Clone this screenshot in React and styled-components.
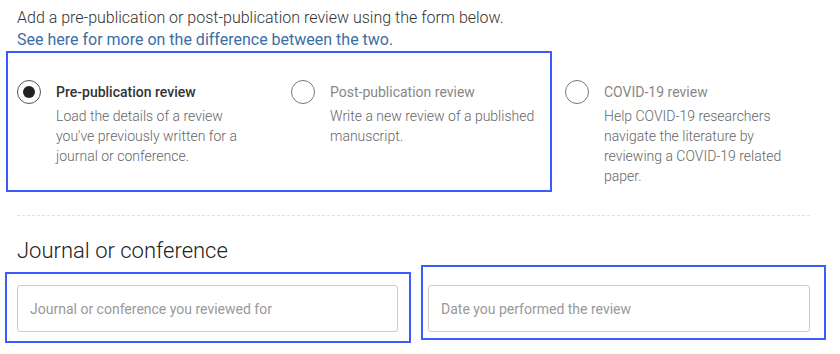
import React from "react";
import styled, { createGlobalStyle } from "styled-components";

const GlobalStyle = createGlobalStyle`
    body {
        margin: 0;
        background: #fff;
        font-family: Roboto, "Liberation Sans", sans-serif;
        font-weight: 300;
        color: #333;
    }
`;

const Page = styled.div`
    position: relative;
    width: 793px;
    min-height: 347px;
    padding: 7px 30px 0 17px;
`;

const Intro = styled.p`
    margin: 0;
    font-size: 16px;
    line-height: 22px;
    color: #333;
`;

const Link = styled.a`
    color: #3b6ea5;
    font-weight: 400;
    text-decoration: none;
`;

const Types = styled.div`
    display: grid;
    grid-template-columns: repeat(3, 274px);
    padding-top: 31px;
    height: 105px;
`;

const Type = styled.label`
    display: flex;
    align-items: flex-start;
    gap: 15px;
    padding-right: 28px;
    cursor: pointer;
`;

const Radio = styled.span`
    flex: none;
    box-sizing: border-box;
    width: 24px;
    height: 24px;
    margin-top: -2px;
    border-radius: 50%;
    border: 1.5px solid ${p => (p.checked ? "#555" : "#777")};
    display: flex;
    align-items: center;
    justify-content: center;

    &::after {
        content: "";
        display: ${p => (p.checked ? "block" : "none")};
        width: 12px;
        height: 12px;
        border-radius: 50%;
        background: #222;
    }
`;

const TypeText = styled.div`
    font-size: 14px;
    line-height: 20px;
`;

const TypeTitle = styled.div`
    font-weight: ${p => (p.checked ? 500 : 400)};
    color: ${p => (p.checked ? "#333" : "#888")};
    margin-bottom: 4px;
`;

const TypeDesc = styled.div`
    color: #666;
`;

const Divider = styled.hr`
    margin: 28px 0 0;
    border: 0;
    border-top: 1px dashed #e2e2e2;
`;

const Heading = styled.h2`
    margin: 20px 0 0;
    font-size: 22px;
    line-height: 30px;
    font-weight: 300;
    color: #222;
`;

const Fields = styled.div`
    display: grid;
    grid-template-columns: 381px 382px;
    gap: 30px;
    margin-top: 19px;
`;

const Input = styled.input`
    box-sizing: border-box;
    width: 100%;
    height: 47px;
    padding: 0 12px;
    border: 1px solid #ccc;
    border-radius: 3px;
    font-family: inherit;
    font-weight: 400;
    font-size: 14px;
    color: #333;
    outline: none;

    &::placeholder {
        color: #999;
    }
`;

const Highlight = styled.div`
    position: absolute;
    box-sizing: border-box;
    border: 2px solid #3d5cff;
    pointer-events: none;
`;

const types = [
    {
        id: "pre",
        title: "Pre-publication review",
        desc: "Load the details of a review you've previously written for a journal or conference.",
        checked: true
    },
    {
        id: "post",
        title: "Post-publication review",
        desc: "Write a new review of a published manuscript."
    },
    {
        id: "covid",
        title: "COVID-19 review",
        desc: "Help COVID-19 researchers navigate the literature by reviewing a COVID-19 related paper."
    }
];

const highlights = [
    { left: 6, top: 51, width: 546, height: 141 },
    { left: 5, top: 272, width: 406, height: 71 },
    { left: 421, top: 265, width: 405, height: 75 }
];

const App = () => (
    <>
        <GlobalStyle />
        <Page>
            <Intro>
                Add a pre-publication or post-publication review using the form below.
                <br />
                <Link href="#">See here for more on the difference between the two.</Link>
            </Intro>

            <Types>
                {types.map(t => (
                    <Type key={t.id}>
                        <Radio checked={t.checked} />
                        <TypeText>
                            <TypeTitle checked={t.checked}>{t.title}</TypeTitle>
                            <TypeDesc>{t.desc}</TypeDesc>
                        </TypeText>
                    </Type>
                ))}
            </Types>

            <Divider />

            <Heading>Journal or conference</Heading>
            <Fields>
                <Input placeholder="Journal or conference you reviewed for" />
                <Input placeholder="Date you performed the review" />
            </Fields>

            {highlights.map((h, i) => (
                <Highlight key={i} style={h} />
            ))}
        </Page>
    </>
);

export default App;
